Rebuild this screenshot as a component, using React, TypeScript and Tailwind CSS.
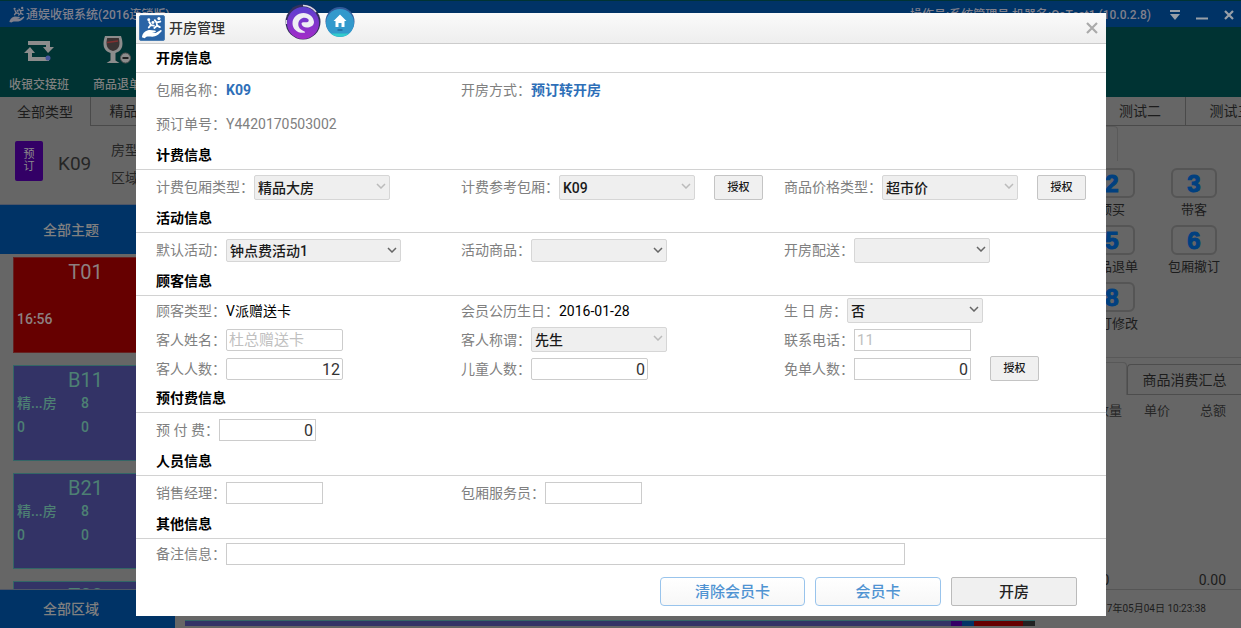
import type { ReactNode } from 'react';

const ROOMS = [
	{ name: 'T01', busy: true, type: '', size: '', left: '16:56', right: '' },
	{ name: 'B11', busy: false, type: '精...房', size: '8', left: '0', right: '0' },
	{ name: 'B21', busy: false, type: '精...房', size: '8', left: '0', right: '0' },
	{ name: 'T02', busy: false, type: '', size: '', left: '', right: '' },
];

const SHORTCUTS = [
	{ key: '2', label: '预买' },
	{ key: '3', label: '带客' },
	{ key: '5', label: '商品退单' },
	{ key: '6', label: '包厢撤订' },
	{ key: '8', label: '预订修改' },
];

function HandLogo({ className }: { className: string }) {
	return (
		<svg viewBox="0 0 26 26" className={className} fill="currentColor">
			<path d="M2 23c.5-3.500 3-6.500 6.500-7.500 3-.8 5 .2 7.500.2 1.600 0 1.600 1.600 0 2l-3 .5 4 .2 5-3c1.300-.6 2 .5 1.200 1.400-2.200 2.500-4.200 4.400-7 5.200-3.500 1-6.500-.4-9.200.6L5 24z" />
			<circle cx="9.500" cy="4" r="1.600" />
			<circle cx="14" cy="7" r="1.600" />
			<circle cx="20.500" cy="2.800" r="1.700" />
			<path
				d="M10 6.500l2 3.500 3 .5M11 10.500l-1.500 2M16 4.500l2 2.500 4-1M18 7l.5 3.500-3 2.500M18.500 10.500l3 1.500"
				stroke="currentColor"
				strokeWidth="2"
				strokeLinecap="round"
				fill="none"
			/>
		</svg>
	);
}

function SwapIcon() {
	return (
		<svg viewBox="0 0 30 24" className="h-6 w-[30px]" fill="#8c8c8c">
			<path d="M4 2h22v6h4l-6 6-5-6h3V6H4z" />
			<path d="M6 8l5 6H8v4h17v4H4v-8H0z" />
			<circle cx="24" cy="19" r="2.500" fill="#45559c" />
		</svg>
	);
}

function WineIcon() {
	return (
		<svg viewBox="0 0 28 30" className="h-[30px] w-7">
			<path d="M2 1h16c2.500 7 2.500 15-5.500 17v7.500l4 2.500h-13l4-2.500V18C-.5 16-.5 8 2 1z" fill="#8c8c8c" />
			<path d="M4.200 3h11.600c1.500 6 1 11.500-5.800 13C3.200 14.500 2.700 9 4.200 3z" fill="#3a3333" />
			<path d="M4 7.500l11-1.500" stroke="#803030" strokeWidth="1.500" />
			<circle cx="22.500" cy="23" r="5" fill="#8c8c8c" stroke="#555" />
			<path d="M19.500 23h6" stroke="#222" strokeWidth="2" />
		</svg>
	);
}

function SwirlBadge() {
	return (
		<svg viewBox="0 0 36 36" className="size-9">
			<defs>
				<linearGradient id="swirl" x1="0" y1="0" x2="0" y2="1">
					<stop offset="0" stopColor="#5a3fd0" />
					<stop offset="1" stopColor="#a42cc8" />
				</linearGradient>
			</defs>
			<circle cx="18" cy="18" r="17.500" fill="#33305c" />
			<path d="M1.500 20a17 17 0 0 1 0-4M18 1.500A17 17 0 0 1 31 8" stroke="#d8d8e4" strokeWidth="1.500" fill="none" />
			<circle cx="18" cy="19" r="16" fill="url(#swirl)" />
			<path
				d="M29 18C28.500 12.500 24 9 18.500 9 12.500 9 7.500 13.500 7.500 19.200c0 5.800 5 10.300 11.500 9.600 1-.1 1.500-.9.500-1.400-4-1.400-6.500-4-6.200-7.600.3-3.500 3-6 6.200-6 2.600 0 4.500 1.400 4.200 3-.3 1.500-2.200 1.800-4.500 1.400-1.500-.2-2.700.3-2.700 1.500.3 2.300 3.200 4.300 6.500 3.800 3.600-.5 6-2.500 6-5.500z"
				fill="#eeeef4"
			/>
		</svg>
	);
}

function HomeBadge() {
	return (
		<svg viewBox="0 0 30 30" className="size-[30px]">
			<circle cx="15" cy="14.500" r="14.500" fill="#335a99" />
			<circle cx="15" cy="16" r="14" fill="#3399cc" />
			<path d="M6 26.500a14 14 0 0 0 18 0z" fill="#33cccc" />
			<path d="M15 7.500l6.500 6.500h-2v6h-3v-4h-3v4h-3v-6h-2z" fill="#fff" />
			<path d="M12.500 23h5" stroke="#22669a" strokeWidth="1.500" />
		</svg>
	);
}

function SectionTitle({ children }: { children: ReactNode }) {
	return (
		<h3 className="h-[29px] border-b border-[#d2d2d2] px-5 text-sm leading-7 font-bold text-black">{children}</h3>
	);
}

function Row({ className, children }: { className: string; children: ReactNode }) {
	return <div className={`grid grid-cols-[305fr_323fr_302fr] items-center px-5 ${className}`}>{children}</div>;
}

function Field({ label, htmlFor, children }: { label: string; htmlFor?: string; children: ReactNode }) {
	return (
		<div className="flex items-center whitespace-nowrap">
			<label htmlFor={htmlFor} className="shrink-0 text-sm text-[#808080]">
				{label}：
			</label>
			{children}
		</div>
	);
}

function Select({
	id,
	value = '',
	disabled,
	className = 'h-[25px] w-[136px]',
}: {
	id: string;
	value?: string;
	disabled?: boolean;
	className?: string;
}) {
	return (
		<div className={`relative ${className}`}>
			<select
				id={id}
				disabled={disabled}
				defaultValue={value}
				className="block h-full w-full appearance-none rounded-xs border border-[#d6d6d6] bg-[#efefef] pt-px pl-[3px] text-sm leading-5 font-medium text-[#1a1a1a] opacity-100"
			>
				<option value={value}>{value}</option>
			</select>
			<svg
				viewBox="0 0 10 6"
				className={`pointer-events-none absolute top-2 right-1 h-1.5 w-2.5 ${disabled ? 'text-[#bbbbbb]' : 'text-[#666666]'}`}
			>
				<path d="M1 1l4 4 4-4" fill="none" stroke="currentColor" strokeWidth="1.500" />
			</svg>
		</div>
	);
}

function TextInput({ id, className, value, placeholder }: { id: string; className: string; value?: string; placeholder?: string }) {
	return (
		<input
			id={id}
			type="text"
			defaultValue={value}
			placeholder={placeholder}
			className={`h-[22px] border border-[#cccccc] bg-white px-0.5 pt-px leading-5 text-[#333333] placeholder:text-[#c0c0c0] ${className}`}
		/>
	);
}

function AuthButton() {
	return (
		<button
			type="button"
			className="ml-[19px] h-[25px] w-[49px] rounded-xs border border-[#c4c4c4] bg-[#f0f0f0] pt-0.5 text-[11px] font-medium text-[#1a1a1a]"
		>
			授权
		</button>
	);
}

function TopBar() {
	return (
		<header>
			<div className="flex h-[27px] items-center border-t border-[#003333] bg-[#003366] pt-0.5 text-xs font-medium text-[#80808c]">
				<HandLogo className="ml-2 size-[18px]" />
				<span>通娱收银系统(2016连锁版)</span>
				<span className="ml-auto">操作员:系统管理员 机器名:CcTest1 (10.0.2.8)</span>
				<div className="mr-1.5 ml-[18px] flex gap-[15px] text-[#99a0a8]">
					<button type="button" aria-label="菜单">
						<svg viewBox="0 0 12 12" className="size-3">
							<path d="M1 2h10" stroke="currentColor" strokeWidth="2" />
							<path d="M1 5h10l-5 6z" fill="currentColor" />
						</svg>
					</button>
					<button type="button" aria-label="最小化">
						<svg viewBox="0 0 12 12" className="size-3">
							<path d="M0 9.500h12" stroke="currentColor" strokeWidth="2" />
						</svg>
					</button>
					<button type="button" aria-label="关闭">
						<svg viewBox="0 0 12 12" className="size-3">
							<path d="M2 2l8 8M10 2l-8 8" stroke="currentColor" strokeWidth="2.200" />
						</svg>
					</button>
				</div>
			</div>
			<div className="flex h-[70px] bg-[#003333] text-xs font-medium text-[#808080]">
				<button type="button" className="flex w-[78px] flex-col items-center justify-between pt-3 pb-1">
					<SwapIcon />
					收银交接班
				</button>
				<button type="button" className="flex w-[78px] flex-col items-center justify-between pt-2 pb-1">
					<WineIcon />
					商品退单
				</button>
			</div>
		</header>
	);
}

function TypeTabs() {
	return (
		<nav className="flex h-[29px] justify-between text-sm text-[#1c1c1c]">
			<div className="flex">
				<button type="button" className="w-[90px]">全部类型</button>
				<button type="button" className="w-[94px] border-b border-l border-[#4a4a4a]">精品大房</button>
			</div>
			<div className="flex w-[146px] overflow-hidden">
				<button type="button" className="w-[90px] shrink-0 border-b border-[#4a4a4a]">测试二</button>
				<button type="button" className="w-[90px] shrink-0 border-b border-l border-[#4a4a4a]">测试三</button>
			</div>
		</nav>
	);
}

function RoomSidebar() {
	return (
		<aside className="flex w-[175px] shrink-0 flex-col">
			<div className="flex h-[79px] items-center border-b border-[#4d5566] pb-2 pl-[15px] text-[#262626]">
				<div className="flex h-10 w-7 items-center justify-center rounded-xs bg-[#330066] text-center text-[11px] leading-3 text-[#8c8c8c]">
					预
					<br />
					订
				</div>
				<span className="ml-[15px] w-[53px] pt-1.5 text-[19px]">K09</span>
				<div className="pt-1.5 text-sm leading-7">
					<p>房型</p>
					<p>区域</p>
				</div>
			</div>
			<button type="button" className="h-[49px] shrink-0 bg-[#003366] pl-[43px] text-left text-sm font-medium text-[#808080]">
				全部主题
			</button>
			<div className="flex h-0 grow flex-col gap-3 overflow-hidden px-[13px] pt-[3px]">
				{ROOMS.map((room) => (
					<div
						key={room.name}
						className={`h-24 w-[144px] shrink-0 border pr-0.5 pl-[3px] text-sm font-medium ${
							room.busy ? 'border-[#662222] bg-[#660000] text-[#8c8080]' : 'border-[#336666] bg-[#333366] text-[#4d8073]'
						}`}
					>
						<p className="h-[25px] text-center text-xl leading-7 font-normal">{room.name}</p>
						<div className="grid grid-cols-[64px_1fr] leading-6">
							<span className="h-6">{room.type}</span>
							<span>{room.size}</span>
							<span>{room.left}</span>
							<span>{room.right}</span>
						</div>
					</div>
				))}
			</div>
			<button
				type="button"
				className="h-[39px] shrink-0 border-t border-[#4d5566] bg-[#003366] pl-[43px] text-left text-sm font-medium text-[#808080]"
			>
				全部区域
			</button>
		</aside>
	);
}

function OrderSidebar() {
	return (
		<aside className="flex w-[170px] shrink-0 flex-col text-[#1c1c1c]">
			<div className="h-[42px]">
				<div className="h-[35px] w-[47px] rounded-tr border-t border-r border-[#5a5a5a]" />
			</div>
			<div className="grid h-[189px] grid-cols-2 content-start gap-y-1 pr-1.5">
				{SHORTCUTS.map(({ key, label }) => (
					<button key={key} type="button" className="flex flex-col items-center text-[13px]">
						<span className="h-[30px] w-[46px] rounded-md border-2 border-[#555555] font-['Liberation_Sans',sans-serif] text-2xl leading-7 font-bold text-[#004080] [-webkit-text-stroke:1px_#004080]">
							{key}
						</span>
						<span className="h-[23px] leading-6">{label}</span>
					</button>
				))}
			</div>
			<div className="flex h-[38px] items-end border-t border-[#585858]">
				<div className="h-[33px] w-[56px] rounded-tr border-t border-r border-[#585858]" />
				<button type="button" className="h-[31px] flex-1 rounded-tl border border-r-0 border-[#4d4d4d] text-sm">
					商品消费汇总
				</button>
			</div>
			<table className="w-full text-right text-[13px] text-[#262626]">
				<thead>
					<tr className="h-8">
						<th className="w-[51px] font-normal">数量</th>
						<th className="w-12 font-normal">单价</th>
						<th className="pr-[15px] font-normal">总额</th>
					</tr>
				</thead>
			</table>
			<div className="mt-auto flex h-5 justify-between border-b border-[#555555] pr-[15px] pl-[11px] text-sm leading-5">
				<span>0.00</span>
				<span>0.00</span>
			</div>
			<p className="h-[38px] pr-[35px] text-right text-[10px] leading-[38px] whitespace-nowrap">2017年05月04日 10:23:38</p>
		</aside>
	);
}

function OpenRoomDialog() {
	return (
		<div role="dialog" aria-labelledby="dialog-title" className="flex w-full flex-col bg-white">
			<div className="flex h-[31px] items-center border-b border-[#cccccc] bg-linear-to-b from-[#fafafa] to-[#eeeeee] pr-2 pl-[3px]">
				<div className="size-[26px] rounded-xs border border-[#4d7fb3] bg-[#2a64a6] text-white">
					<HandLogo className="size-6" />
				</div>
				<h2 id="dialog-title" className="ml-1 text-sm font-medium text-[#333333]">开房管理</h2>
				<button type="button" aria-label="关闭" className="ml-auto text-[#aaaaaa]">
					<svg viewBox="0 0 12 12" className="size-3">
						<path d="M1 1l10 10M11 1L1 11" stroke="currentColor" strokeWidth="2.200" />
					</svg>
				</button>
			</div>

			<SectionTitle>开房信息</SectionTitle>
			<Row className="h-[34px]">
				<Field label="包厢名称">
					<b className="text-sm text-[#2e6fb8]">K09</b>
				</Field>
				<Field label="开房方式">
					<b className="text-sm font-bold text-[#2e6fb8]">预订转开房</b>
				</Field>
			</Row>
			<Row className="h-[34px]">
				<Field label="预订单号">
					<span className="text-sm text-[#808080]">Y4420170503002</span>
				</Field>
			</Row>

			<SectionTitle>计费信息</SectionTitle>
			<Row className="h-[34px]">
				<Field label="计费包厢类型" htmlFor="billType">
					<Select id="billType" value="精品大房" disabled />
				</Field>
				<Field label="计费参考包厢" htmlFor="billRoom">
					<Select id="billRoom" value="K09" disabled />
					<AuthButton />
				</Field>
				<Field label="商品价格类型" htmlFor="priceType">
					<Select id="priceType" value="超市价" disabled />
					<AuthButton />
				</Field>
			</Row>

			<SectionTitle>活动信息</SectionTitle>
			<Row className="h-[34px]">
				<Field label="默认活动" htmlFor="activity">
					<Select id="activity" value="钟点费活动1" className="h-[23px] w-[175px]" />
				</Field>
				<Field label="活动商品" htmlFor="activityGoods">
					<Select id="activityGoods" className="h-[23px] w-[136px]" />
				</Field>
				<Field label="开房配送" htmlFor="delivery">
					<Select id="delivery" />
				</Field>
			</Row>

			<SectionTitle>顾客信息</SectionTitle>
			<div className="pb-px">
				<Row className="h-[29px]">
					<Field label="顾客类型">
						<span className="text-sm text-black">V派赠送卡</span>
					</Field>
					<Field label="会员公历生日">
						<span className="text-sm text-black">2016-01-28</span>
					</Field>
					<Field label="生 日 房" htmlFor="birthday">
						<Select id="birthday" value="否" />
					</Field>
				</Row>
				<Row className="h-[29px]">
					<Field label="客人姓名" htmlFor="guestName">
						<TextInput id="guestName" placeholder="杜总赠送卡" className="w-[117px] rounded-xs text-[15px]" />
					</Field>
					<Field label="客人称谓" htmlFor="guestTitle">
						<Select id="guestTitle" value="先生" disabled />
					</Field>
					<Field label="联系电话" htmlFor="phone">
						<TextInput id="phone" placeholder="11" className="w-[117px] text-[15px]" />
					</Field>
				</Row>
				<Row className="h-[29px]">
					<Field label="客人人数" htmlFor="guests">
						<TextInput id="guests" value="12" className="w-[117px] rounded-xs text-right text-base" />
					</Field>
					<Field label="儿童人数" htmlFor="children">
						<TextInput id="children" value="0" className="w-[117px] rounded-xs text-right text-base" />
					</Field>
					<Field label="免单人数" htmlFor="freeGuests">
						<TextInput id="freeGuests" value="0" className="w-[117px] text-right text-base" />
						<AuthButton />
					</Field>
				</Row>
			</div>

			<SectionTitle>预付费信息</SectionTitle>
			<Row className="h-[34px]">
				<Field label="预 付 费" htmlFor="prepay">
					<TextInput id="prepay" value="0" className="w-[97px] text-right text-base" />
				</Field>
			</Row>

			<SectionTitle>人员信息</SectionTitle>
			<Row className="h-[34px]">
				<Field label="销售经理" htmlFor="manager">
					<TextInput id="manager" className="w-[97px] text-base" />
				</Field>
				<Field label="包厢服务员" htmlFor="waiter">
					<TextInput id="waiter" className="w-[97px] text-base" />
				</Field>
			</Row>

			<SectionTitle>其他信息</SectionTitle>
			<div className="h-[30px] pt-1 pr-[201px] pl-5">
				<Field label="备注信息" htmlFor="remark">
					<TextInput id="remark" className="min-w-0 flex-1 text-base" />
				</Field>
			</div>
			<div className="flex justify-end gap-2.5 pt-2 pr-[29px] pb-2.5 text-[15px] font-medium">
				<button
					type="button"
					className="h-[29px] w-[145px] rounded border border-[#99c4ec] bg-linear-to-b from-white to-[#f7f7f7] pt-0.5 text-[#4f93d2]"
				>
					清除会员卡
				</button>
				<button
					type="button"
					className="h-[29px] w-[126px] rounded border border-[#99c4ec] bg-linear-to-b from-white to-[#f7f7f7] pt-0.5 text-[#4f93d2]"
				>
					会员卡
				</button>
				<button type="button" className="h-[29px] w-[126px] rounded-xs border border-[#bbbbbb] bg-[#f0f0f0] pt-0.5 text-[#222222]">
					开房
				</button>
			</div>
		</div>
	);
}

export default function App() {
	return (
		<div className="relative flex h-screen flex-col overflow-hidden bg-[#666666] font-['Roboto','Noto_Sans_CJK_SC',sans-serif]">
			<TopBar />
			<TypeTabs />
			<div className="flex min-h-0 flex-1">
				<RoomSidebar />
				<main className="flex flex-1 flex-col justify-end pr-9 pb-0.5 pl-2.5">
					{/* room status bar */}
					<div className="flex h-1.5 border-t border-[#336666]">
						<div className="flex-1 bg-[#333366]" />
						<div className="w-[11px] bg-[#330066]" />
						<div className="w-3 bg-[#003366]" />
						<div className="w-[49px] bg-[#660000]" />
						<div className="w-3 bg-[#222222]" />
					</div>
				</main>
				<OrderSidebar />
			</div>

			<div className="absolute inset-0 flex items-start pt-[13px] pr-[135px] pl-[136px]">
				<OpenRoomDialog />
			</div>
			<div className="absolute top-1 left-[285px] flex items-center gap-1">
				<SwirlBadge />
				<HomeBadge />
			</div>
		</div>
	);
}
